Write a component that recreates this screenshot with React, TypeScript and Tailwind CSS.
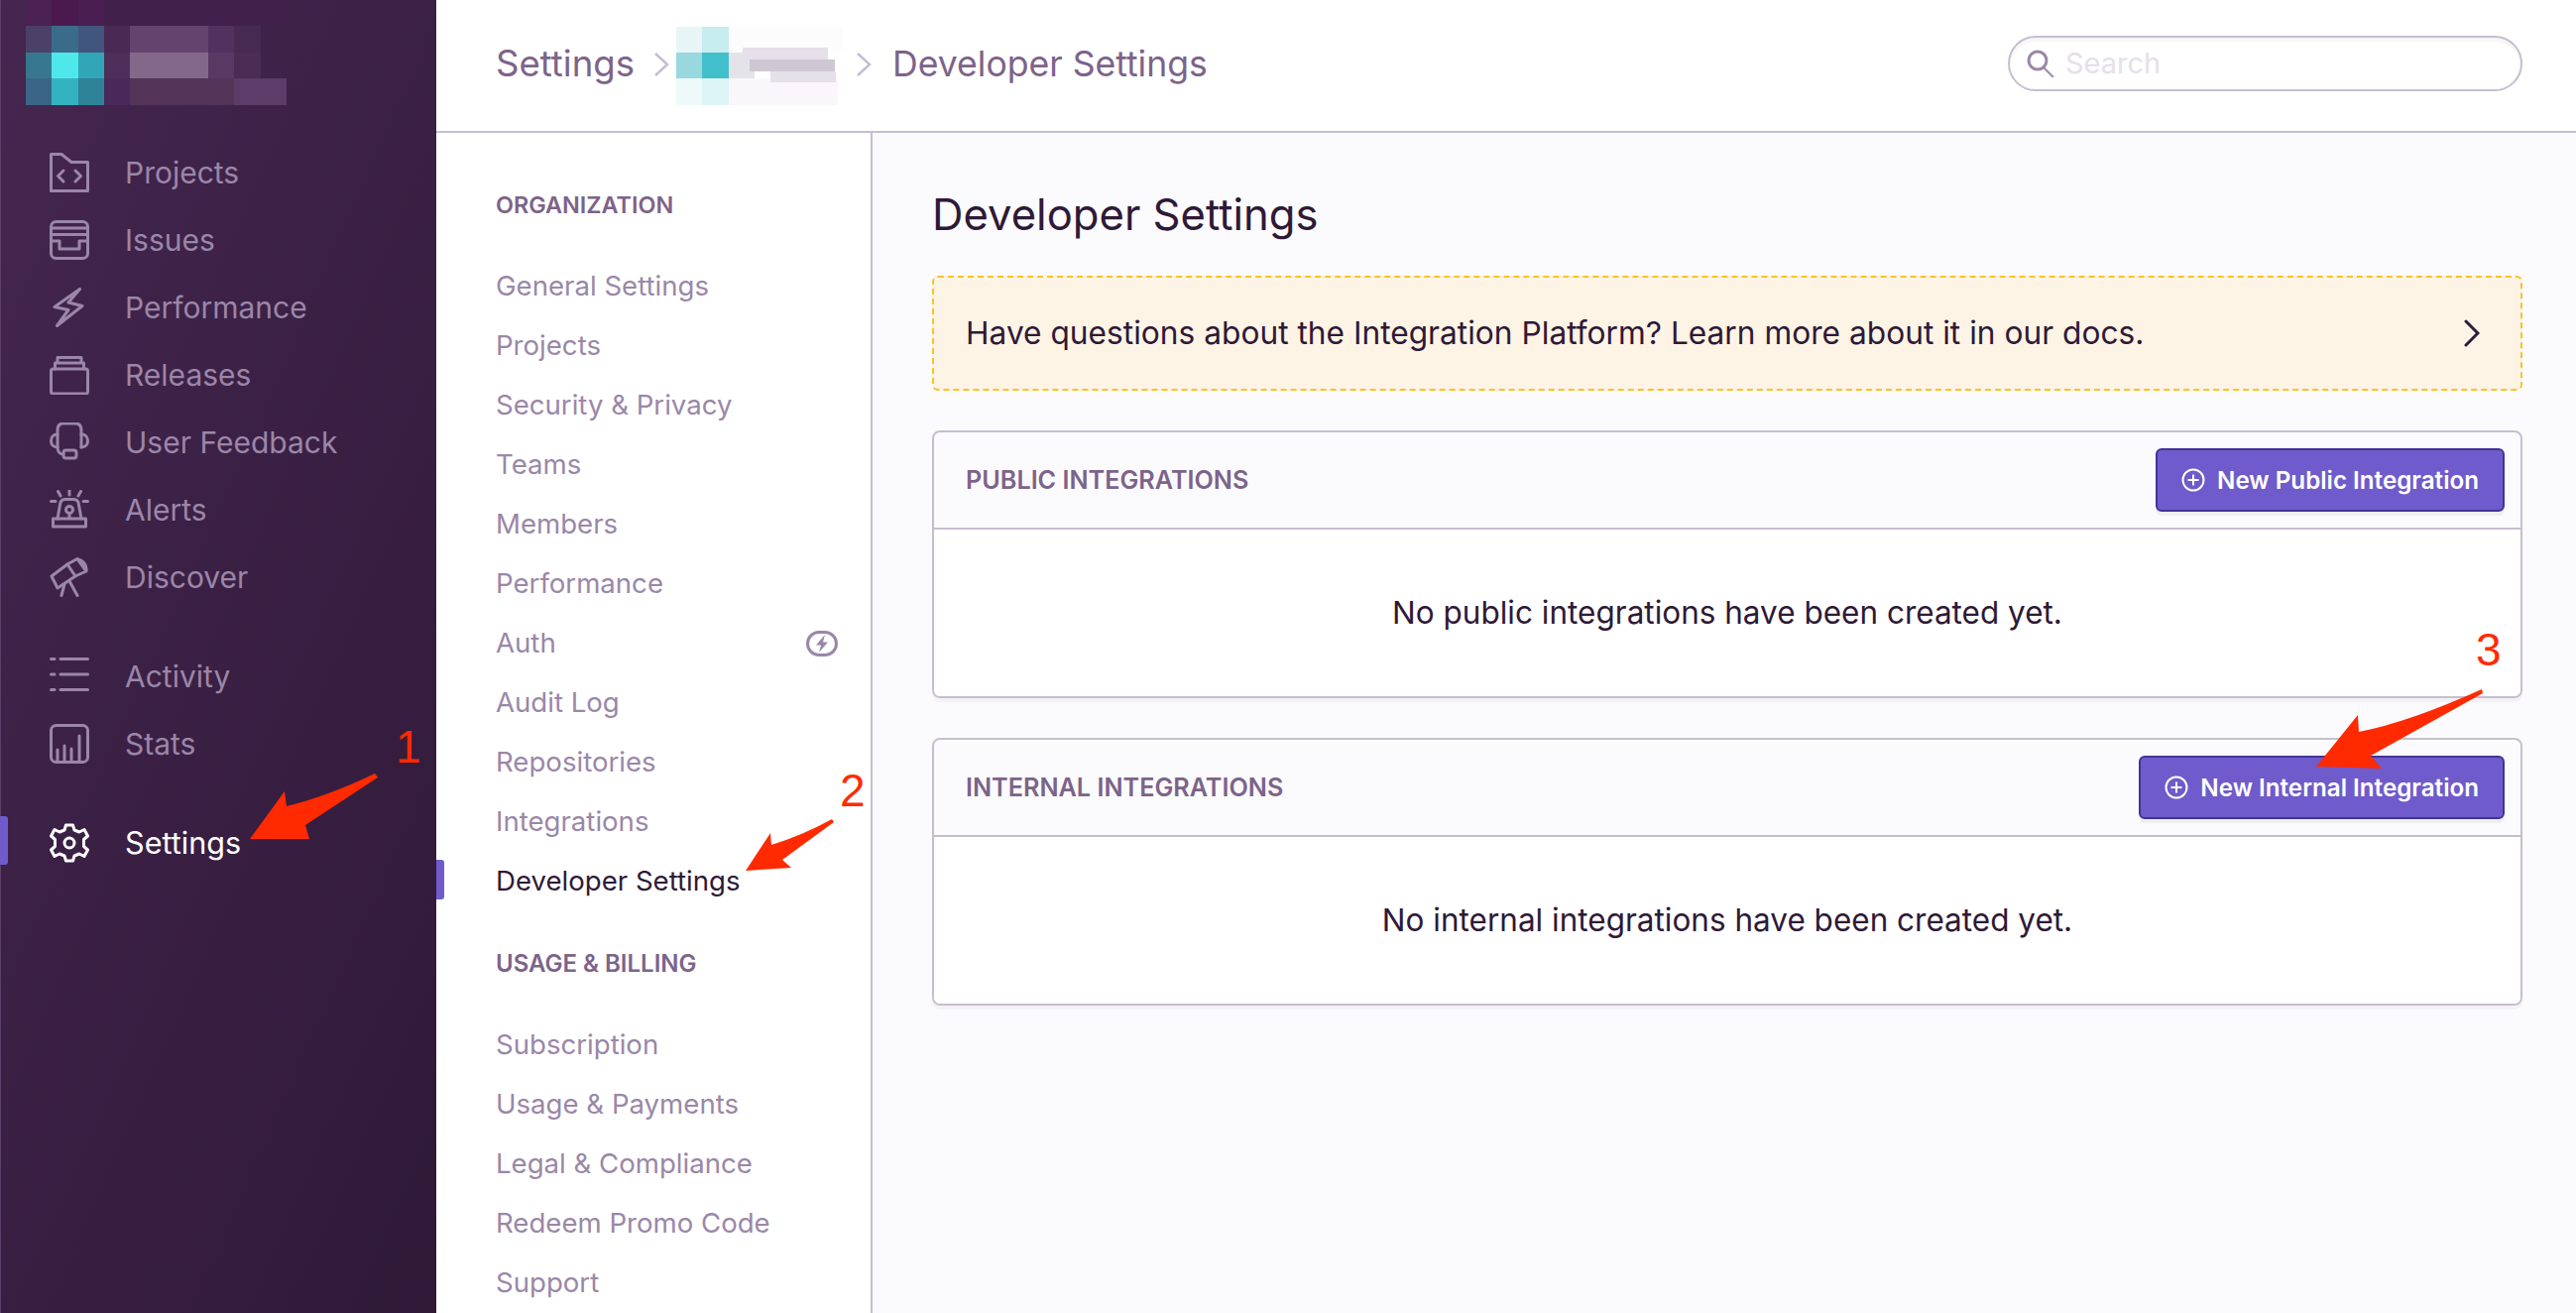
import React, { FC, ReactNode } from "react";

const Icon: FC<{ children: ReactNode; size?: number; className?: string }> = ({
  children,
  size = 40,
  className,
}) => (
  <svg
    width={size}
    height={size}
    viewBox="0 0 40 40"
    fill="none"
    stroke="currentColor"
    strokeWidth={3}
    strokeLinecap="round"
    strokeLinejoin="round"
    className={className}
  >
    {children}
  </svg>
);

const mainNav = [
  {
    label: "Projects",
    icon: (
      <>
        <path d="M1.5 1.5H12L22 9.5H38.5V38.5H1.5Z" />
        <path d="M14 18L8.5 23.5L14 29M26 18L31.5 23.5L26 29" />
      </>
    ),
  },
  {
    label: "Issues",
    icon: (
      <>
        <rect x="1.5" y="1.5" width="37" height="37" rx="5" />
        <path d="M1.5 8H38.5M1.5 14.5H38.5M1.5 21H10V29H30V21H38.5" />
      </>
    ),
  },
  {
    label: "Performance",
    icon: <path d="M30.5 1.5L5 19.5L19 22.5L7.5 38.5L33 18.5L19 15Z" />,
  },
  {
    label: "Releases",
    icon: (
      <>
        <rect x="1.5" y="14" width="37" height="25" rx="2" />
        <path d="M5.5 14V8H34.5V14M8 8V2.5H32V8" />
      </>
    ),
  },
  {
    label: "User Feedback",
    icon: (
      <>
        <path d="M8 25V8Q8 1 14 1H26Q32 1 32 8V25" />
        <path d="M8 12C3.5 12 1.5 15 1.5 18.5C1.5 22 3.5 25 8 25M32 12C36.5 12 38.5 15 38.5 18.5C38.5 22 36.5 25 32 25" />
        <path d="M8 25C8 29 10 32 14 32" />
        <rect x="14" y="28" width="13" height="8" rx="2.5" />
      </>
    ),
  },
  {
    label: "Alerts",
    icon: (
      <>
        <path d="M8 29L11 12.5C12 10 14 9.5 16 9.5H24C26 9.5 28 10 29 12.5L32 29" />
        <circle cx="20" cy="20" r="3.5" />
        <path d="M20 23.5V29M3.5 29H36.5V37H3.5ZM20 0.5V5M8.5 1.5L11 6M31.5 1.5L29 6M1.5 11.5H6M34 11.5H38.5" />
      </>
    ),
  },
  {
    label: "Discover",
    icon: (
      <>
        <path d="M2 19L18 7L26 19L8 31Z" />
        <path d="M18 7L28 1.5L37 14L26 19M28 2C34 3 38 8 37 14M15 27L12 38.5M20 24L28 38.5" />
      </>
    ),
  },
];

const bottomNav = [
  {
    label: "Activity",
    icon: (
      <path d="M1.5 2.5H5M11 2.5H38.5M1.5 18H5M11 18H38.5M1.5 33.5H5M11 33.5H38.5" />
    ),
  },
  {
    label: "Stats",
    icon: (
      <>
        <rect x="1.5" y="1.5" width="37" height="37" rx="5" />
        <path d="M8 38V26M15 38V22M22 38V25M30 38V12" />
      </>
    ),
  },
];

const SideItem: FC<{ label: string; icon: ReactNode }> = ({ label, icon }) => (
  <div className="flex h-[68px] items-center gap-[36px] pl-[50px] text-[#9b86a9]">
    <Icon>{icon}</Icon>
    <span className="text-[30px]">{label}</span>
  </div>
);

const orgNav = [
  "General Settings",
  "Projects",
  "Security & Privacy",
  "Teams",
  "Members",
  "Performance",
  "Auth",
  "Audit Log",
  "Repositories",
  "Integrations",
  "Developer Settings",
];

const billingNav = [
  "Subscription",
  "Usage & Payments",
  "Legal & Compliance",
  "Redeem Promo Code",
  "Support",
];

const NavLink: FC<{ label: string }> = ({ label }) => {
  const active = label === "Developer Settings";
  return (
    <div
      className={`relative flex h-[60px] items-center justify-between pr-[33px] pl-[60px] text-[27.6px] ${
        active ? "text-[#2f1937]" : "text-[#9a87a8]"
      }`}
    >
      {active && (
        <div className="absolute top-[8px] left-0 h-[40px] w-[8px] rounded-r-[3px] bg-[#6f5bcb]" />
      )}
      <span>{label}</span>
      {label === "Auth" && (
        <svg width="32" height="26" viewBox="0 0 32 26" fill="none">
          <rect x="1.5" y="1.5" width="29" height="23" rx="11.5" stroke="#9a87a8" strokeWidth="3" />
          <path d="M19 4L10 14.5H15L13 22L22 11.5H17Z" fill="#9a87a8" />
        </svg>
      )}
    </div>
  );
};

const SectionLabel: FC<{ children: ReactNode; className?: string }> = ({
  children,
  className,
}) => <div className={`font-semibold text-[#7d6389] ${className ?? ""}`}>{children}</div>;

const Panel: FC<{ title: string; button: string; empty: string }> = ({
  title,
  button,
  empty,
}) => (
  <section className="overflow-hidden rounded-[8px] border-2 border-[#c6becf] shadow-[0_4px_0_rgba(50,30,60,0.04)]">
    <div className="flex h-[96px] items-center justify-between pr-[16px] pl-[32px]">
      <SectionLabel className="pt-[2px] text-[25.2px]">{title}</SectionLabel>
      <button className="flex h-[64px] items-center gap-[12px] rounded-[6px] border-2 border-[#413496] bg-[#6f5bcb] px-[24px] text-[24.2px] font-semibold text-white shadow-[0_4px_0_rgba(50,30,60,0.06)]">
        <svg width="24" height="24" viewBox="0 0 24 24" fill="none" stroke="currentColor" strokeWidth="2">
          <circle cx="12" cy="12" r="10.5" />
          <path d="M12 6.5V17.5M6.5 12H17.5" />
        </svg>
        <span className="pt-[2px]">{button}</span>
      </button>
    </div>
    <div className="flex h-[170px] items-center justify-center border-t-2 border-[#c6becf] bg-white text-[31.5px] text-[#2f1937]">
      {empty}
    </div>
  </section>
);

const Crumb: FC<{ className?: string }> = ({ className }) => (
  <svg width="16" height="24" viewBox="0 0 16 24" fill="none" stroke="#c6becf" strokeWidth="2.5" className={className}>
    <path d="M2 1L14 12L2 23" />
  </svg>
);

const App: FC = () => (
  <div className="relative flex h-[1324px] w-[2598px] overflow-hidden bg-white font-['Inter',sans-serif]">
    <aside className="relative w-[440px] shrink-0 bg-[linear-gradient(114deg,#452650_0%,#2f1937_100%)] shadow-[inset_1px_0_0_#5a3f68]">
      <div className="h-[140px] pl-[26px]">
        <svg width="264" height="116" viewBox="0 0 264 116" shapeRendering="crispEdges">
          <rect x="0" y="0" width="26" height="26" fill="#4b2253" />
          <rect x="26" y="0" width="27" height="26" fill="#4a1a4e" />
          <rect x="53" y="0" width="26" height="26" fill="#4a1e50" />
          <rect x="79" y="0" width="184" height="26" fill="#41214c" />
          <rect x="0" y="26" width="26" height="27" fill="#4a4068" />
          <rect x="26" y="26" width="27" height="27" fill="#3a6c8a" />
          <rect x="53" y="26" width="26" height="27" fill="#42557e" />
          <rect x="79" y="26" width="26" height="27" fill="#4a2a55" />
          <rect x="105" y="26" width="79" height="27" fill="#64446f" />
          <rect x="184" y="26" width="26" height="27" fill="#51325f" />
          <rect x="210" y="26" width="27" height="27" fill="#472a52" />
          <rect x="0" y="53" width="26" height="26" fill="#37788f" />
          <rect x="26" y="53" width="27" height="26" fill="#4fe8ea" />
          <rect x="53" y="53" width="26" height="26" fill="#30a6b6" />
          <rect x="79" y="53" width="26" height="26" fill="#4d2f5a" />
          <rect x="105" y="53" width="79" height="26" fill="#83688a" />
          <rect x="184" y="53" width="26" height="26" fill="#5a3a65" />
          <rect x="210" y="53" width="27" height="26" fill="#4a2c55" />
          <rect x="0" y="79" width="26" height="27" fill="#3a6586" />
          <rect x="26" y="79" width="27" height="27" fill="#33b3c0" />
          <rect x="53" y="79" width="26" height="27" fill="#2f8398" />
          <rect x="79" y="79" width="26" height="27" fill="#49295a" />
          <rect x="105" y="79" width="105" height="27" fill="#533358" />
          <rect x="210" y="79" width="53" height="27" fill="#5c3c68" />
        </svg>
      </div>
      {mainNav.map((item) => (
        <SideItem key={item.label} {...item} />
      ))}
      <div className="h-[32px]" />
      {bottomNav.map((item) => (
        <SideItem key={item.label} {...item} />
      ))}
      <div className="relative mt-[32px] flex h-[68px] items-center gap-[36px] pl-[50px] text-white">
        <div className="absolute top-[7px] left-0 h-[49px] w-[8px] rounded-r-[3px] bg-[#6f5bcb]" />
        <Icon>
          <path d="M16.5 2H23.5L25 7L30 9L35 6.5L38.5 13L34.5 16.5V23.5L38.5 27L35 33.5L30 31L25 33L23.5 38H16.5L15 33L10 31L5 33.5L1.5 27L5.5 23.5V16.5L1.5 13L5 6.5L10 9L15 7Z" />
          <circle cx="20" cy="20" r="5" />
        </Icon>
        <span className="text-[30.6px]">Settings</span>
      </div>
    </aside>

    <div className="flex min-w-0 flex-1 flex-col">
      <header className="flex h-[134px] shrink-0 items-center justify-between border-b-2 border-[#c6becf] pr-[54px] pl-[60px]">
        <div className="flex items-center text-[#7d6389]">
          <span className="-mt-[3px] w-[140px] text-[36.6px] whitespace-nowrap">Settings</span>
          <Crumb className="mr-[7px] ml-[19px] -mt-[3px]" />
          <svg width="171" height="79" viewBox="0 0 171 79" shapeRendering="crispEdges">
            <rect x="0" y="0" width="26" height="26" fill="#e8f5f6" />
            <rect x="26" y="0" width="27" height="26" fill="#c9ecee" />
            <rect x="53" y="0" width="115" height="26" fill="#fdfcfd" />
            <rect x="0" y="26" width="26" height="26" fill="#98d8de" />
            <rect x="26" y="26" width="27" height="26" fill="#41bfcb" />
            <rect x="53" y="26" width="26" height="26" fill="#e4e3ea" />
            <rect x="0" y="52" width="26" height="27" fill="#eef9fa" />
            <rect x="26" y="52" width="27" height="27" fill="#def5f7" />
            <rect x="53" y="52" width="110" height="27" fill="#f9f7fa" />
            <rect x="67" y="21" width="86" height="12" fill="#e6e0e8" />
            <rect x="74" y="33" width="86" height="12" fill="#cfc7d4" />
            <rect x="95" y="45" width="66" height="11" fill="#e6e0e8" />
          </svg>
          <Crumb className="mr-[21px] ml-[10px] -mt-[3px]" />
          <span className="-mt-[3px] text-[35.6px] whitespace-nowrap">Developer Settings</span>
        </div>
        <div className="mb-[4px] flex h-[56px] w-[519px] items-center gap-[11px] rounded-full border-2 border-[#c6becf] pl-[17px] shadow-[inset_0_4px_0_rgba(50,30,60,0.04)]">
          <svg width="28" height="28" viewBox="0 0 28 28" fill="none" stroke="#9b86a9" strokeWidth="3">
            <circle cx="11" cy="11" r="9" />
            <path d="M17 18L27 28" strokeWidth="2" />
          </svg>
          <span className="text-[29px] text-[#e5e0ea]">Search</span>
        </div>
      </header>

      <div className="flex min-h-0 flex-1">
        <nav className="w-[440px] shrink-0 border-r-2 border-[#c6becf] pt-[55px]">
          <SectionLabel className="pl-[60px] text-[23.4px]">ORGANIZATION</SectionLabel>
          <div className="mt-[35px]">
            {orgNav.map((label) => (
              <NavLink key={label} label={label} />
            ))}
          </div>
          <SectionLabel className="mt-[35px] pl-[60px] text-[24px]">USAGE &amp; BILLING</SectionLabel>
          <div className="mt-[34px]">
            {billingNav.map((label) => (
              <NavLink key={label} label={label} />
            ))}
          </div>
        </nav>

        <main className="flex min-w-0 flex-1 flex-col bg-[#fbfbfd] pt-[54px] pr-[54px] pl-[60px]">
          <h1 className="text-[43.6px] leading-[58px] text-[#2f1937]">Developer Settings</h1>
          <div className="mt-[32px] flex h-[116px] items-center justify-between rounded-[6px] border-2 border-dashed border-[#fcc226] bg-[#fdf4e5] pr-[41px] pl-[32px] text-[31.7px] text-[#2f1937]">
            <span>Have questions about the Integration Platform? Learn more about it in our docs.</span>
            <svg width="16" height="28" viewBox="0 0 16 28" fill="none" stroke="#2f1937" strokeWidth="3" strokeLinecap="round">
              <path d="M2 2L14 14L2 26" />
            </svg>
          </div>
          <div className="mt-[40px] flex flex-col gap-[40px]">
            <Panel
              title="PUBLIC INTEGRATIONS"
              button="New Public Integration"
              empty="No public integrations have been created yet."
            />
            <Panel
              title="INTERNAL INTEGRATIONS"
              button="New Internal Integration"
              empty="No internal integrations have been created yet."
            />
          </div>
        </main>
      </div>
    </div>

    {/* screenshot annotations drawn on top */}
    <svg width="2598" height="1324" className="pointer-events-none absolute top-0 left-0" fill="#ff2a00">
      <path d="M378 780L381 784L308 832L312 846L252 846L287 798L289 813Q330 803 378 780Z" />
      <path d="M839 826L841 829L789 867L798 875L752 878L777 840L778 852Q810 842 839 826Z" />
      <path d="M2503 695L2504 699L2391 762L2402 775L2336 773L2378 721L2379 738Q2430 728 2503 695Z" />
    </svg>
    <span className="absolute top-[727px] left-[399px] font-['Liberation_Sans',sans-serif] text-[46px] leading-[52px] text-[#ff2a00]">1</span>
    <span className="absolute top-[771px] left-[847px] font-['Liberation_Sans',sans-serif] text-[46px] leading-[52px] text-[#ff2a00]">2</span>
    <span className="absolute top-[629px] left-[2497px] font-['Liberation_Sans',sans-serif] text-[46px] leading-[52px] text-[#ff2a00]">3</span>
  </div>
);

export default App;
